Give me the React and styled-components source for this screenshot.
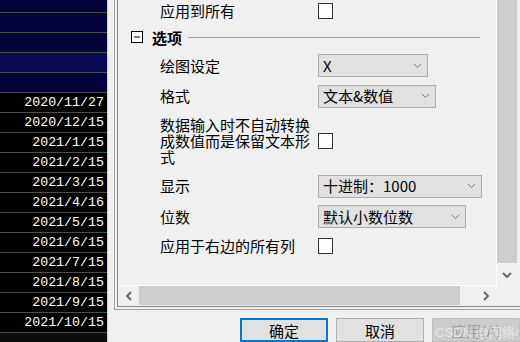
import React from "react";
import styled, { createGlobalStyle } from "styled-components";

const GlobalStyle = createGlobalStyle`
  body {
    margin: 0;
    background: #f0f0f0;
  }
`;

const FONT = `"Noto Sans CJK SC", "Noto Sans", sans-serif`;

const Page = styled.div`
  display: flex;
  width: 520px;
  height: 342px;
  overflow: hidden;
  background: #f0f0f0;
  font-family: ${FONT};
`;

const Sheet = styled.div`
  display: flex;
  flex-direction: column;
  width: 107px;
  flex-shrink: 0;
  border-right: 1px solid #d4d0bc;
  background: #0d0d0d;
`;

const Cell = styled.div`
  height: ${(p) => p.h || 19}px;
  flex-shrink: 0;
  border-bottom: 1px solid #4d4d4d;
  background: ${(p) => p.bg || "#000"};
  color: #fff;
  font-family: "Liberation Mono", monospace;
  font-size: 13.3px;
  line-height: 19px;
  text-align: right;
  padding-right: 3px;
`;

const Dialog = styled.div`
  display: flex;
  flex-direction: column;
  flex: 1;
  padding-left: 6px;
`;

const Frame = styled.div`
  width: 406px;
  flex-shrink: 0;
  border: 1px solid #a0a0a0;
  border-top: none;
  padding: 0 2px 2px 2px;
`;

const Inner = styled.div`
  display: flex;
  flex-direction: column;
  border: 1px solid #828790;
  border-top: none;
`;

const Body = styled.div`
  display: flex;
  height: 286px;
`;

const Content = styled.div`
  display: flex;
  flex-direction: column;
  width: 378px;
  border-right: 1px solid #fff;
  border-bottom: 1px solid #fff;
  overflow: hidden;
  font-size: 15px;
  color: #000;
`;

const Row = styled.div`
  display: grid;
  grid-template-columns: 200px 1fr;
  align-items: center;
  height: ${(p) => p.h}px;
  flex-shrink: 0;
`;

const Label = styled.div`
  padding-left: 42px;
  line-height: ${(p) => (p.multi ? "16px" : "20px")};
`;

const Category = styled.div`
  display: flex;
  align-items: center;
  height: 30px;
  padding-left: 13px;
  padding-right: 16px;
  flex-shrink: 0;
`;

const CatTitle = styled.span`
  font-weight: 700;
  margin-left: 9px;
  margin-right: 6px;
`;

const CatLine = styled.div`
  flex: 1;
  height: 1px;
  background: #a0a0a0;
`;

const Select = styled.div`
  display: flex;
  align-items: center;
  justify-content: space-between;
  box-sizing: border-box;
  width: ${(p) => p.w}px;
  height: 23px;
  padding: 0 5px 0 4px;
  border: 1px solid #adadad;
  background: #e1e1e1;
  font-size: 15px;
  line-height: 20px;
`;

const Check = styled.div`
  box-sizing: border-box;
  width: 15px;
  height: 16px;
  border: 1px solid #333;
  background: #fff;
`;

const VScroll = styled.div`
  display: flex;
  flex-direction: column;
  width: 20px;
  background: #f0f0f0;
`;

const VThumb = styled.div`
  height: 263px;
  background: #cdcdcd;
`;

const ArrowBox = styled.div`
  display: flex;
  align-items: center;
  justify-content: center;
  flex: ${(p) => (p.grow ? 1 : "none")};
  width: ${(p) => (p.w ? `${p.w}px` : "auto")};
  height: ${(p) => (p.h ? `${p.h}px` : "auto")};
`;

const HScrollRow = styled.div`
  display: flex;
  height: 20px;
`;

const HScroll = styled.div`
  display: flex;
  align-items: stretch;
  width: 379px;
  background: #f0f0f0;
`;

const HThumb = styled.div`
  width: 321px;
  margin-top: 0;
  height: 19px;
  background: #cdcdcd;
`;

const HTrack = styled.div`
  width: 15px;
`;

const Corner = styled.div`
  width: 20px;
  background: #f0f0f0;
`;

const Buttons = styled.div`
  display: flex;
  gap: 8px;
  margin-top: 8px;
  padding-left: 126px;
`;

const Button = styled.div`
  position: relative;
  display: flex;
  align-items: center;
  justify-content: center;
  box-sizing: border-box;
  width: 88px;
  height: 24px;
  flex-shrink: 0;
  font-size: 15px;
  border: ${(p) =>
    p.primary ? "2px solid #0078d7" : p.disabled ? "1px solid #bfbfbf" : "1px solid #adadad"};
  background: ${(p) => (p.disabled ? "#cccccc" : "#e1e1e1")};
  color: ${(p) => (p.disabled ? "#a0a0a0" : "#000")};
`;

const Watermark = styled.span`
  position: absolute;
  left: 2px;
  top: 3px;
  white-space: nowrap;
  font-family: "Liberation Sans", "Noto Sans CJK SC", sans-serif;
  font-size: 13px;
  color: rgba(255, 255, 255, 0.55);
`;

const Chevron = ({ dir = "down", size = 8, color = "#606060", width = 1 }) => {
  const pts = {
    down: "1,1 5,5 9,1",
    left: "5,1 1,5 5,9",
    right: "1,1 5,5 1,9",
  }[dir];
  const vb = dir === "down" ? "0 0 10 6" : "0 0 6 10";
  const w = dir === "down" ? size : size * 0.6;
  const h = dir === "down" ? size * 0.6 : size;
  return (
    <svg width={w} height={h} viewBox={vb}>
      <polyline points={pts} fill="none" stroke={color} strokeWidth={width} />
    </svg>
  );
};

const MinusBox = () => (
  <svg width="12" height="12" viewBox="0 0 12 12">
    <rect x="0.5" y="0.5" width="11" height="11" fill="#fff" stroke="#000" />
    <line x1="3" y1="6" x2="9" y2="6" stroke="#000" />
  </svg>
);

const NAVY = "#04043a";
const dates = [
  "2020/11/27",
  "2020/12/15",
  "2021/1/15",
  "2021/2/15",
  "2021/3/15",
  "2021/4/16",
  "2021/5/15",
  "2021/6/15",
  "2021/7/15",
  "2021/8/15",
  "2021/9/15",
  "2021/10/15",
];

const SelectBox = ({ w, children }) => (
  <Select w={w}>
    <span>{children}</span>
    <Chevron dir="down" size={9} color="#707070" />
  </Select>
);

export default function App() {
  return (
    <>
      <GlobalStyle />
      <Page>
        <Sheet>
          <Cell h={12} bg={NAVY} />
          <Cell bg={NAVY} />
          <Cell bg={NAVY} />
          <Cell bg="#0a0a52" />
          <Cell bg={NAVY} />
          {dates.map((d) => (
            <Cell key={d}>{d}</Cell>
          ))}
        </Sheet>

        <Dialog>
          <Frame>
            <Inner>
              <Body>
                <Content>
                  <Row h={22}>
                    <Label>应用到所有</Label>
                    <Check />
                  </Row>
                  <Category>
                    <MinusBox />
                    <CatTitle>选项</CatTitle>
                    <CatLine />
                  </Category>
                  <Row h={27}>
                    <Label>绘图设定</Label>
                    <SelectBox w={110}>X</SelectBox>
                  </Row>
                  <Row h={34}>
                    <Label>格式</Label>
                    <SelectBox w={118}>文本&amp;数值</SelectBox>
                  </Row>
                  <Row h={56}>
                    <Label multi>数据输入时不自动转换成数值而是保留文本形式</Label>
                    <Check />
                  </Row>
                  <Row h={34}>
                    <Label>显示</Label>
                    <SelectBox w={164}>十进制：1000</SelectBox>
                  </Row>
                  <Row h={27}>
                    <Label>位数</Label>
                    <SelectBox w={148}>默认小数位数</SelectBox>
                  </Row>
                  <Row h={32}>
                    <Label>应用于右边的所有列</Label>
                    <Check />
                  </Row>
                </Content>
                <VScroll>
                  <VThumb />
                  <ArrowBox grow>
                    <Chevron dir="down" size={10} width={1.8} />
                  </ArrowBox>
                </VScroll>
              </Body>
              <HScrollRow>
                <HScroll>
                  <ArrowBox w={21}>
                    <Chevron dir="left" size={10} width={1.8} />
                  </ArrowBox>
                  <HThumb />
                  <HTrack />
                  <ArrowBox grow>
                    <Chevron dir="right" size={10} width={1.8} />
                  </ArrowBox>
                </HScroll>
                <Corner />
              </HScrollRow>
            </Inner>
          </Frame>
          <Buttons>
            <Button primary>确定</Button>
            <Button>取消</Button>
            <Button disabled>
              应用(A)
              <Watermark>CSDN @网络小猪</Watermark>
            </Button>
          </Buttons>
        </Dialog>
      </Page>
    </>
  );
}
